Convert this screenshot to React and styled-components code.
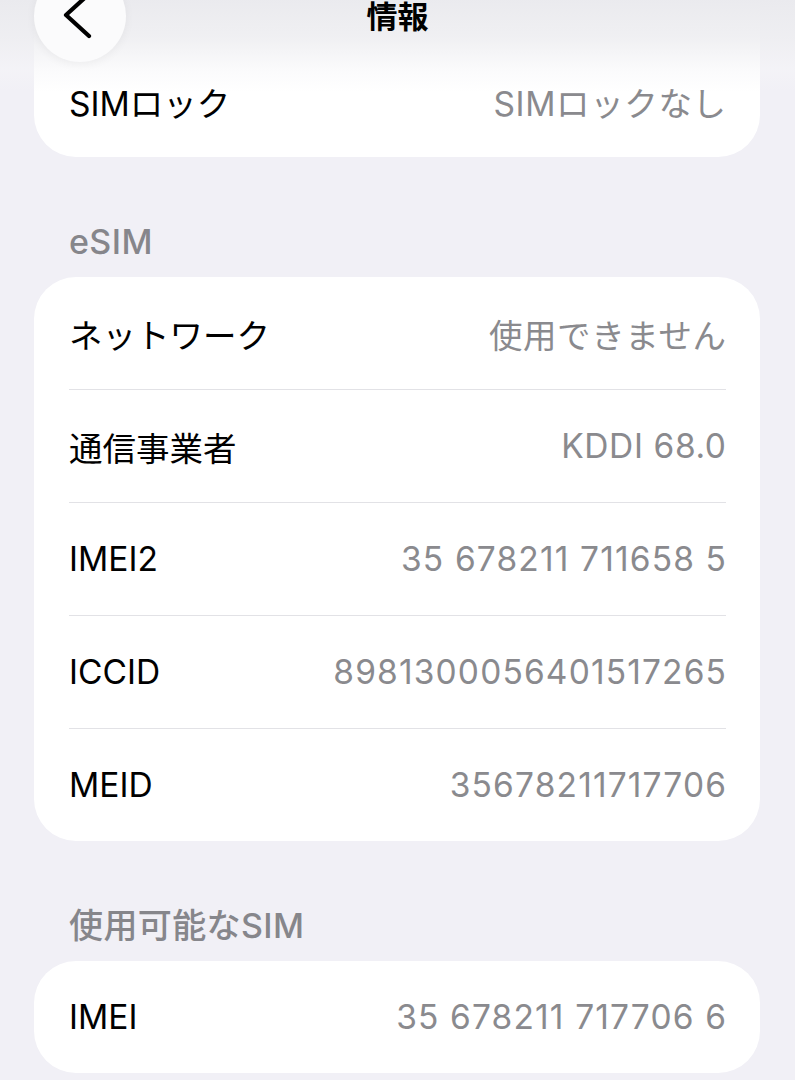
import React from 'react'
import styled, { createGlobalStyle } from 'styled-components'

const GlobalStyle = createGlobalStyle`
  html, body {
    margin: 0;
    padding: 0;
    background: #f1f0f6;
  }
  * { box-sizing: border-box; }
`

// eSIM section rows; num marks the values that are digit strings
const esim = [
  { label: 'ネットワーク', value: '使用できません' },
  { label: '通信事業者', value: 'KDDI 68.0' },
  { label: 'IMEI2', value: '35 678211 711658 5', num: true },
  { label: 'ICCID', value: '8981300056401517265', num: true },
  { label: 'MEID', value: '35678211717706', num: true },
]

const BackIcon = () => (
  <svg width="92" height="92" viewBox="0 0 92 92">
    <polyline points="55,24 32,45 55,66" fill="none" stroke="#000" strokeWidth="4.2" strokeLinecap="round" strokeLinejoin="round" />
  </svg>
)

const App = () => {
  return (
    <Screen>
      <GlobalStyle />
      <Content>
        <Card $hiddenTop>
          <Row>
            <Label>SIMロック</Label>
            <Value>SIMロックなし</Value>
          </Row>
        </Card>

        <Header>eSIM</Header>
        <Card>
          {esim.map((r) => (
            <Row key={r.label}>
              <Label>{r.label}</Label>
              <Value $num={r.num}>{r.value}</Value>
            </Row>
          ))}
        </Card>

        <Header>使用可能なSIM</Header>
        <Card>
          <Row>
            <Label>IMEI</Label>
            <Value $num>35 678211 717706 6</Value>
          </Row>
        </Card>
      </Content>

      <NavFade />
      <BackButton><BackIcon /></BackButton>
      <Title>情報</Title>
    </Screen>
  )
}

export default App

const Screen = styled.div`
  position: relative;
  width: 795px;
  height: 1080px;
  overflow: hidden;
  background: #f1f0f6;
  font-family: Inter, 'Noto Sans CJK JP', sans-serif;
`
const Content = styled.div`
  display: flex;
  flex-direction: column;
  margin-top: -68px;
  padding: 0 35px 0 34px;
`
const Card = styled.div`
  background: #fff;
  border-radius: 42px;
  display: flex;
  flex-direction: column;
  padding-top: ${(p) => (p.$hiddenTop ? '113px' : '0')};
`
const Row = styled.div`
  height: 112px;
  margin: 0 34px 0 35px;
  display: flex;
  align-items: center;
  justify-content: space-between;
  font-size: 33.5px;
  &:not(:last-child) {
    height: 113px;
    border-bottom: 1px solid #e2e2e6;
  }
`
const Label = styled.span`
  color: #000;
`
const Value = styled.span`
  color: #8a8a8e;
  letter-spacing: ${(p) => (p.$num ? '1.15px' : '0.6px')};
  margin-right: ${(p) => (p.$num ? '-1.15px' : '-0.6px')};
`
const Header = styled.div`
  margin: 67px 0 17px 35px;
  line-height: 36px;
  font-size: 34px;
  font-weight: 500;
  letter-spacing: 0.4px;
  color: #86868b;
`
const NavFade = styled.div`
  position: absolute;
  top: 0;
  left: 0;
  right: 0;
  height: 92px;
  background: linear-gradient(
    to bottom,
    rgba(234, 234, 238, 0.98) 0%,
    rgba(238, 238, 241, 0.9) 40%,
    rgba(246, 246, 248, 0.5) 75%,
    rgba(255, 255, 255, 0) 100%
  );
`
const BackButton = styled.div`
  position: absolute;
  left: 34px;
  top: -30px;
  width: 92px;
  height: 92px;
  border-radius: 50%;
  background: #fbfbfc;
  box-shadow: 0 2px 10px rgba(0, 0, 0, 0.05);
  display: flex;
`
const Title = styled.div`
  position: absolute;
  top: 1px;
  left: 0;
  right: 0;
  text-align: center;
  line-height: 31px;
  font-size: 31px;
  font-weight: 700;
  color: #000;
`
